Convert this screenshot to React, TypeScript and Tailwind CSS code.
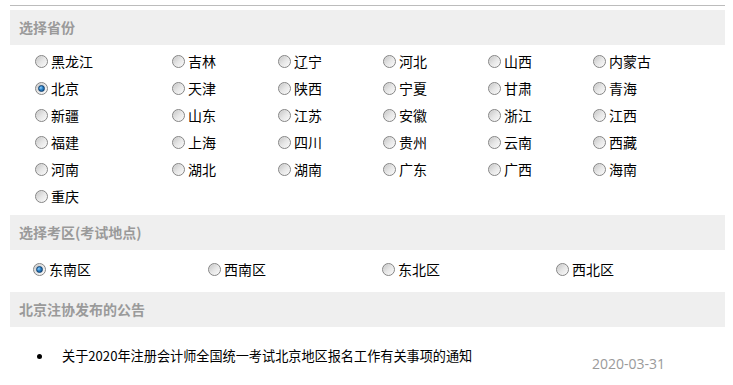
import React from "react";

const provinces = [
  "黑龙江", "吉林", "辽宁", "河北", "山西", "内蒙古",
  "北京", "天津", "陕西", "宁夏", "甘肃", "青海",
  "新疆", "山东", "江苏", "安徽", "浙江", "江西",
  "福建", "上海", "四川", "贵州", "云南", "西藏",
  "河南", "湖北", "湖南", "广东", "广西", "海南",
  "重庆",
];

const regions = ["东南区", "西南区", "东北区", "西北区"];

function Radio({ checked }: { checked?: boolean }) {
  return (
    <span className="relative inline-flex h-[13px] w-[13px] shrink-0 items-center justify-center rounded-full border border-[#858585] bg-gradient-to-br from-[#c4c4c4] via-[#e6e6e6] to-[#fbfbfb] shadow-[inset_0_0_1px_#ffffff]">
      {checked && (
        <span className="h-[7px] w-[7px] rounded-full border border-[#0f3f6e] bg-[radial-gradient(circle_at_35%_35%,#8fd0ff_0%,#2a7fc4_45%,#0d4a85_100%)]" />
      )}
    </span>
  );
}

function Header({ children }: { children: React.ReactNode }) {
  return (
    <div className="h-[35px] bg-[#efefef] pl-[9px] text-[14px] font-bold leading-[35px] text-[#9a9a9a]">
      {children}
    </div>
  );
}

export default function App() {
  return (
    <div
      className="w-[725px] bg-white pl-[10px] pt-[5px] text-black"
      style={{ fontFamily: '"Noto Sans CJK SC", "Noto Sans", sans-serif' }}
    >
      <div className="h-[1px] bg-[#bcbcbc]" />
      <div className="mt-[4px]">
        <Header>选择省份</Header>
        <div className="grid grid-cols-[137px_106px_105px_105px_105px_1fr] pb-[5px] pl-[25px] pt-[3px]">
          {provinces.map((p) => (
            <label key={p} className="flex h-[27px] items-center gap-[3px] text-[14px]">
              <Radio checked={p === "北京"} />
              <span>{p}</span>
            </label>
          ))}
        </div>
        <Header>选择考区(考试地点)</Header>
        <div className="grid grid-cols-[175px_174px_174px_1fr] pb-[9px] pl-[23px] pt-[6px]">
          {regions.map((r) => (
            <label key={r} className="flex h-[27px] items-center gap-[3px] text-[14px]">
              <Radio checked={r === "东南区"} />
              <span>{r}</span>
            </label>
          ))}
        </div>
        <Header>北京注协发布的公告</Header>
        <ul className="pt-[19px]">
          <li className="flex items-start pl-[27px]">
            <span className="mt-[8px] h-[5px] w-[5px] shrink-0 rounded-full bg-black" />
            <span className="ml-[20px] text-[13.15px] leading-[20px]">
              关于2020年注册会计师全国统一考试北京地区报名工作有关事项的通知
            </span>
            <span
              className="ml-auto mr-[60px] mt-[8px] text-[14px] leading-[20px] text-[#9a9a9a]"
              style={{ fontFamily: '"Open Sans", sans-serif' }}
            >
              2020-03-31
            </span>
          </li>
        </ul>
      </div>
    </div>
  );
}
